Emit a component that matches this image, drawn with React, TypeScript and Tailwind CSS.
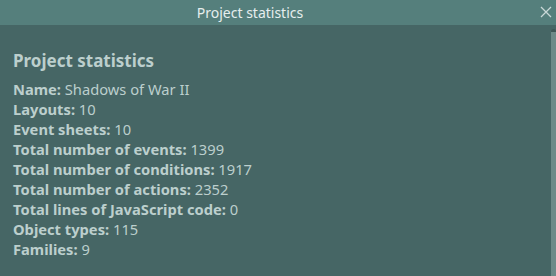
import React from 'react';

const stats = [
  { label: 'Name', value: 'Shadows of War II' },
  { label: 'Layouts', value: '10' },
  { label: 'Event sheets', value: '10' },
  { label: 'Total number of events', value: '1399' },
  { label: 'Total number of conditions', value: '1917' },
  { label: 'Total number of actions', value: '2352' },
  { label: 'Total lines of JavaScript code', value: '0' },
  { label: 'Object types', value: '115' },
  { label: 'Families', value: '9' },
];

const App = () => (
  <div className="w-[556px] h-[276px] flex flex-col bg-[#466665] overflow-hidden font-['Noto_Sans',sans-serif]">
    <div className="relative h-[25px] shrink-0 bg-[#557f7c] flex items-center justify-center pr-[56px]">
      <span className="text-[14px] text-[#e6eeee]">Project statistics</span>
      <svg className="absolute right-[4px] top-[6px]" width="12" height="12" viewBox="0 0 12 12">
        <path d="M1 1L11 11M11 1L1 11" stroke="#c9d8d7" strokeWidth="1.3" />
      </svg>
    </div>
    <div className="flex flex-1 min-h-0">
      <div className="flex-1 px-[13px] pt-[24px] text-[#bccfcd]">
        <h1 className="text-[17px] font-bold leading-[24px] mb-[6px]">Project statistics</h1>
        {stats.map((s, index) => (
          <div key={index} className="text-[14.7px] leading-[20px]">
            <span className="font-bold">{s.label}:</span> {s.value}
          </div>
        ))}
      </div>
      <div className="w-[5px] mt-[4px] bg-[#6d8a88] rounded-t-[3px] border-t-[3px] border-[#3d5756]" />
    </div>
  </div>
);

export default App;
